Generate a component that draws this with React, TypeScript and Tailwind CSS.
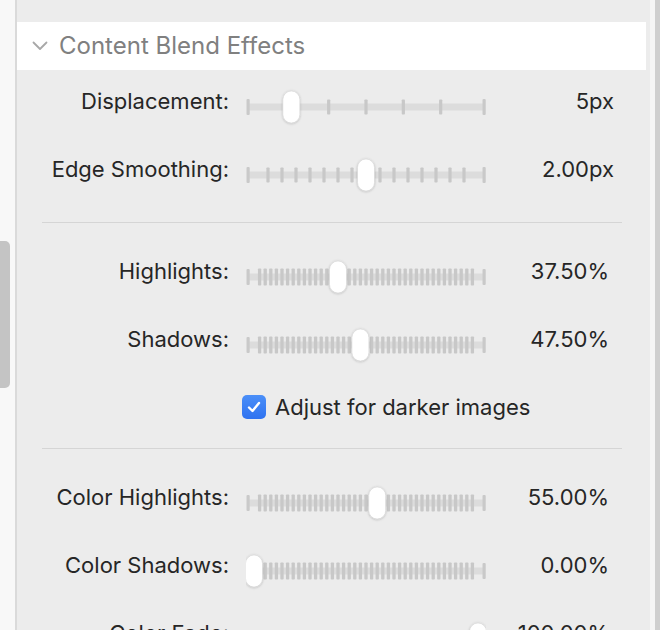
import React from "react";

type SliderProps = { value: number; n: number; dense?: boolean };

function Slider({ value, n, dense }: SliderProps) {
  const cy = 20;
  const ticks: number[] = [];
  for (let k = 1; k < n; k++) ticks.push(8 + (224 * k) / n);
  const tx = 8 + 224 * value;
  const th = dense ? 17 : 15;
  const tw = dense ? 3.3 : 3.2;
  return (
    <svg width="240" height="40" viewBox="0 0 240 40" className="block shrink-0">
      <defs>
        <filter id="thumbShadow" x="-50%" y="-30%" width="200%" height="160%">
          <feDropShadow dx="0" dy="0.5" stdDeviation="0.8" floodColor="#000" floodOpacity="0.25" />
        </filter>
      </defs>
      <rect x="1" y={cy - 3.5} width="238" height="7" fill="#dcdcdc" />
      <rect x="0.5" y={cy - 8} width="3.2" height="16" rx="1" fill="#c9c9c9" />
      <rect x="236.5" y={cy - 8} width="3.2" height="16" rx="1" fill="#c9c9c9" />
      {ticks.map((x, i) => (
        <rect key={i} x={x - tw / 2} y={cy - th / 2} width={tw} height={th} rx="0.8" fill="#c8c8c8" />
      ))}
      <rect
        x={tx - 8.5}
        y={cy - 16}
        width="17"
        height="32"
        rx="8.5"
        fill="#ffffff"
        stroke="#cfcfcf"
        strokeWidth="0.5"
        filter="url(#thumbShadow)"
      />
    </svg>
  );
}

function Row({
  label,
  value,
  v,
  n,
  dense,
  pct,
}: {
  label: string;
  value: string;
  v: number;
  n: number;
  dense?: boolean;
  pct?: boolean;
}) {
  return (
    <div className="flex items-center h-[68px] shrink-0">
      <div className="w-[212px] text-right pb-[13px] text-[22px] text-[#262626] leading-none whitespace-nowrap">{label}</div>
      <div className="ml-[17px]">
        <Slider value={v} n={n} dense={dense} />
      </div>
      <div
        className={
          "w-[128px] text-right pb-[13px] text-[22px] text-[#262626] leading-none whitespace-nowrap " +
          (pct ? "pr-[5px]" : "pr-0")
        }
      >
        {value}
      </div>
    </div>
  );
}

function Divider() {
  return <div className="mt-[13px] mb-[20px] ml-[25px] w-[580px] h-[1px] bg-[#d5d5d5] shrink-0" />;
}

export default function App() {
  return (
    <div
      className="w-[660px] h-[630px] overflow-hidden flex bg-[#ececec]"
      style={{ fontFamily: "Inter, 'Liberation Sans', sans-serif" }}
    >
      <div className="w-[15px] h-full bg-[#f8f8f8] shrink-0">
        <div className="mt-[241px] h-[147px] w-[10px] bg-[#c4c4c4] rounded-r-[5px]" />
      </div>
      <div className="w-[2px] h-full bg-[#dadada] shrink-0" />
      <div className="w-[633px] h-full bg-[#ececec] pt-[22px] shrink-0 overflow-hidden">
        <div className="h-[48px] w-[629px] bg-white flex items-center">
          <svg width="16" height="10" viewBox="0 0 16 10" className="ml-[15px]">
            <path
              d="M1.5 1.5 L8 8 L14.5 1.5"
              fill="none"
              stroke="#a8a8a8"
              strokeWidth="1.8"
              strokeLinecap="round"
              strokeLinejoin="round"
            />
          </svg>
          <span className="ml-[11px] text-[24px] text-[#808080] leading-none">Content Blend Effects</span>
        </div>
        <div className="mt-[3px]">
          <Row label="Displacement:" value="5px" v={1 / 6} n={6} />
          <Row label="Edge Smoothing:" value="2.00px" v={0.5} n={16} />
        </div>
        <Divider />
        <Row label="Highlights:" value="37.50%" v={0.375} n={40} dense pct />
        <Row label="Shadows:" value="47.50%" v={0.475} n={40} dense pct />
        <div className="h-[56px] flex items-center pl-[225px]">
          <div className="w-[24px] h-[24px] rounded-[5px] bg-gradient-to-b from-[#4b8ff8] to-[#2f72f0] flex items-center justify-center">
            <svg width="16" height="16" viewBox="0 0 16 16">
              <path
                d="M3 8.5 L6.5 12 L13 4"
                fill="none"
                stroke="#fff"
                strokeWidth="2.4"
                strokeLinecap="round"
                strokeLinejoin="round"
              />
            </svg>
          </div>
          <span className="ml-[9px] text-[22px] text-[#262626] leading-none">Adjust for darker images</span>
        </div>
        <Divider />
        <Row label="Color Highlights:" value="55.00%" v={0.55} n={40} dense pct />
        <Row label="Color Shadows:" value="0.00%" v={0} n={40} dense pct />
        <Row label="Color Fade:" value="100.00%" v={1} n={40} dense pct />
      </div>
      <div className="w-[5px] h-full bg-[#f5f5f5] shrink-0" />
      <div className="w-[5px] h-full bg-[#cfcfcf] shrink-0" />
    </div>
  );
}
